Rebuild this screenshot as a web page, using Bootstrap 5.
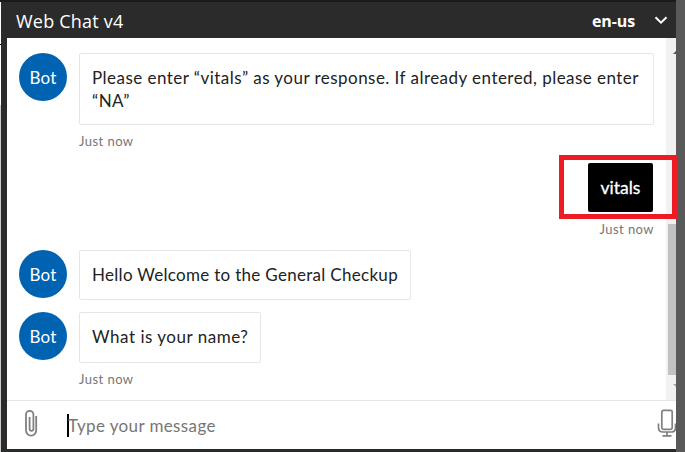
<!DOCTYPE html>
<html lang="en">
<head>
<meta charset="utf-8">
<title>Web Chat v4</title>
<link href="https://cdn.jsdelivr.net/npm/bootstrap@5.3.0/dist/css/bootstrap.min.css" rel="stylesheet">
<style>
body{width:685px;height:452px;overflow:hidden;background:#2a2b2b;font-family:Lato,"Open Sans",sans-serif}
.edge-left{width:1px;background:linear-gradient(#1a1a1a 0 2px,#fff 2px 44px,#000 44px 45px,#fff 45px 105px,#ccc 105px)}
.edge-right{width:9px;background:#595959}
.chat-window{width:675px;border-top:2px solid #1a1a1a}
.chat-head{height:36px;background:#2b2b2b;color:#fff;padding:0 8px 0 15px;font-family:"Open Sans","Noto Sans",sans-serif}
.chat-title{font-size:18px;line-height:36px;letter-spacing:.2px;padding-top:2px}
.chat-lang{font-size:16px;letter-spacing:-.1px;margin-right:19px;padding-top:2px}
.chat-panel{height:411px;margin-left:6px;background:#fff}
.transcript{width:659px;height:362px;padding:15px 12px 0}
.avatar{width:48px;height:48px;background:#0063b1;color:#fff;font-size:17px;letter-spacing:.2px;padding-top:1px}
.bubble{border:1px solid #e6e6e6;border-radius:2px;padding:12px;min-height:50px;font-size:17px;line-height:23px;color:#222;white-space:nowrap;letter-spacing:.46px}
.first-bubble{width:575px;height:72px}
.welcome-bubble{width:332px;letter-spacing:.3px}
.name-bubble{width:182px;height:51px;letter-spacing:.52px}
.row-gap{gap:12px}
.stamp{font-size:13px;line-height:17px;color:#767676;letter-spacing:.45px}
.stamp-left{margin:8px 0 13px 60px}
.stamp-right{margin:9px 0 12px}
.reply{width:65px;height:49px;margin-right:1px;background:#000;color:#fff;border-radius:2px;font-size:17.5px;padding-top:2px;-webkit-text-stroke:.3px #fff}
.callout{width:118px;height:64px;border:5px solid #ed1c24;left:-29px;top:-8px;z-index:2}
.scroll-track{width:10px;background:#f1f1f1}
.scroll-thumb{width:8px;height:151px;top:186px;right:0;background:#c1c1c1}
.scroll-arrow{width:3px;height:3px;right:0}
.arrow-up{top:13px;background:#505050;clip-path:polygon(100% 0,100% 100%,0 100%)}
.arrow-down{bottom:13px;background:#a3a3a3;clip-path:polygon(0 0,100% 0,100% 100%)}
.send-box{height:49px;border-top:1px solid #e6e6e6;padding-left:14px}
.clip-icon{margin:-5px 28px 0 0}
.mic-icon{margin:-5px 0 0}
.caret{width:2px;height:23px;background:#000;margin-top:1px}
.hint{font-size:17px;color:#767676;letter-spacing:.38px;padding-top:2px;margin-left:-1px}
</style>
<script src="https://cdn.jsdelivr.net/npm/bootstrap@5.3.0/dist/js/bootstrap.bundle.min.js"></script>
</head>
<body class="d-flex">
<div class="edge-left"></div>
<main class="chat-window">
  <header class="chat-head d-flex align-items-center">
    <span class="chat-title me-auto">Web Chat v4</span>
    <span class="chat-lang fw-bold">en-us</span>
    <svg width="14" height="10" viewBox="0 0 14 10" fill="none" stroke="#fff" stroke-width="2"><path d="M1.500 2.200 7 7.700l5.500-5.500"/></svg>
  </header>
  <section class="chat-panel">
    <div class="d-flex">
      <div class="transcript">
        <div class="d-flex row-gap">
          <div class="avatar rounded-circle d-flex align-items-center justify-content-center">Bot</div>
          <div class="bubble first-bubble">Please enter “vitals” as your response. If already entered, please enter<br>“NA”</div>
        </div>
        <div class="stamp stamp-left">Just now</div>
        <div class="d-flex justify-content-end">
          <div class="reply position-relative d-flex align-items-center justify-content-center"><span>vitals</span><div class="callout position-absolute"></div></div>
        </div>
        <div class="stamp stamp-right text-end">Just now</div>
        <div class="d-flex row-gap">
          <div class="avatar rounded-circle d-flex align-items-center justify-content-center">Bot</div>
          <div class="bubble welcome-bubble">Hello Welcome to the General Checkup</div>
        </div>
        <div class="d-flex row-gap" style="margin-top:12px">
          <div class="avatar rounded-circle d-flex align-items-center justify-content-center">Bot</div>
          <div class="bubble name-bubble">What is your name?</div>
        </div>
        <div class="stamp stamp-left">Just now</div>
      </div>
      <div class="scroll-track position-relative">
        <div class="scroll-arrow arrow-up position-absolute"></div>
        <div class="scroll-thumb position-absolute"></div>
        <div class="scroll-arrow arrow-down position-absolute"></div>
      </div>
    </div>
    <div class="send-box d-flex align-items-center overflow-hidden">
      <svg class="clip-icon flex-shrink-0" width="18" height="30" viewBox="0 0 18 30" fill="none" stroke="#808080" stroke-width="1.800"><path d="M15.200 8v14.500a5 5 0 0 1-10.200 0V6.500a3.700 3.700 0 0 1 7.400 0V21a1.900 1.900 0 0 1-3.800 0V9"/></svg>
      <span class="caret"></span><span class="hint me-auto">Type your message</span>
      <svg class="mic-icon flex-shrink-0" width="19" height="30" viewBox="0 0 19 30" fill="none" stroke="#808080" stroke-width="1.700"><rect x="4.800" y="2.300" width="10.400" height="19" rx="1.500"/><path d="M1.500 15.500v4q0 4.500 4.500 4.500h8q4.500 0 4.500-4.500v-4M10 24v4M5.500 27.800h9"/></svg>
    </div>
  </section>
</main>
<div class="edge-right"></div>
</body>
</html>
